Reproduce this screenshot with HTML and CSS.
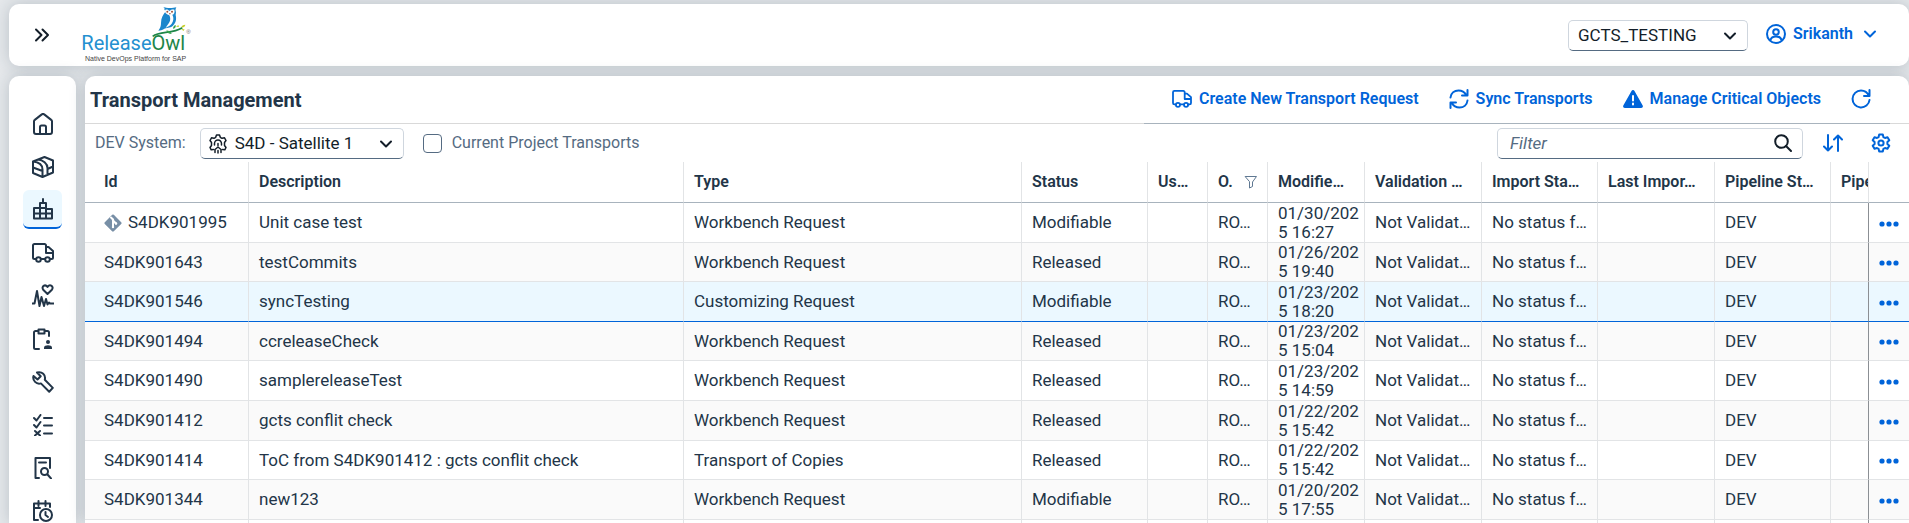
FILE: index.html
```html
<!DOCTYPE html>
<html lang="en">
<head>
<meta charset="utf-8">
<title>Transport Management</title>
<link rel="stylesheet" href="styles.css">
</head>
<body>
<svg class="sprite" aria-hidden="true">
  <symbol id="chevron" viewBox="0 0 14 14"><path d="M2 4.500l5 5 5-5"/></symbol>
  <symbol id="truck" viewBox="0 0 22 20"><path d="M4 16H2.500A1.500 1.500 0 0 1 1 14.500V2.500A1.500 1.500 0 0 1 2.500 1H12.500A1.500 1.500 0 0 1 14 2.500V10H21M14 4h2.500L21 8v6.500A1.500 1.500 0 0 1 19.500 16H18M9 16h4"/><circle cx="6.500" cy="16.500" r="2.300"/><circle cx="15.500" cy="16.500" r="2.300"/></symbol>
  <symbol id="git" viewBox="0 0 18 18"><path class="solid" d="M9 .5a1.200 1.200 0 0 1 .8.300l7.400 7.400a1.200 1.200 0 0 1 0 1.700l-7.400 7.300a1.200 1.200 0 0 1-1.700 0L.8 9.900a1.200 1.200 0 0 1 0-1.700L8.200.800A1.200 1.200 0 0 1 9 .5z"/><path class="inner" d="M7 3.500l2 2v7.500M9 6.500l3 3"/><circle class="dot" cx="9" cy="13" r="1.200"/><circle class="dot" cx="12" cy="9.500" r="1.200"/><circle class="dot" cx="9" cy="6" r="1.200"/></symbol>
  <symbol id="gear" viewBox="0 0 20 20"><path d="M8.200 1.500h3.600l.6 2.600 1.600.9 2.500-.8 1.800 3.100-1.900 1.800v1.800l1.900 1.800-1.800 3.100-2.500-.8-1.600.9-.6 2.600H8.200l-.6-2.600-1.600-.9-2.500.8-1.800-3.100 1.900-1.800V9.100L1.700 7.300l1.800-3.100 2.500.8 1.600-.9z"/><circle cx="10" cy="10" r="2.600"/></symbol>
  <symbol id="dots" viewBox="0 0 20 6"><circle class="solid" cx="3" cy="3" r="2.600"/><circle class="solid" cx="10" cy="3" r="2.600"/><circle class="solid" cx="17" cy="3" r="2.600"/></symbol>
</svg>

<header class="shell">
  <button class="menu-toggle" aria-label="Expand navigation"><svg class="icon" width="16" height="14" viewBox="0 0 16 14"><path d="M2 1.500L7.500 7 2 12.500M8.500 1.500L14 7l-5.500 5.500"/></svg></button>
  <a class="logo" href="#" aria-label="ReleaseOwl home">
    <svg width="112" height="58" viewBox="36 18 336 174">
      <path fill="#1a86cc" d="M279 21c10 4 29 4 40 1-3 5-3 9-1 15l-1 8c3 12 1 24-9 33-8 7-19 5-26 9-6 3-10 5-17 5 6-7 8-15 8-23 0-15 7-27 15-35-6-4-7-9-1-13z"/>
      <path fill="#fff" d="M286 29c6-2 9 0 12 4 4-4 9-6 15-4 2 7 0 14-6 15 5 8 4 19-2 27-5 7-13 8-18 13 4-9 11-14 13-22 2-7 0-13-3-17-8-2-14-8-11-16z"/>
      <g fill="#a0533c"><circle cx="292" cy="35" r="3"/><circle cx="306" cy="35" r="3"/><path d="M297 39h5l-2 6z"/></g>
      <path d="M248 109c22-16 58-7 89-26" fill="none" stroke="#1d8648" stroke-width="5"/>
      <path fill="#35a24d" d="M289 92c6-1 14 4 16 10-8 0-13-4-16-10zM310 87c-2-6 2-10 7-12 1 6-1 10-7 12z"/>
      <path fill="#c7cf2a" d="M334 82c1-5 5-7 12-8-1 6-5 9-12 8zM318 80l7-5 2 6zM334 87l10 1-4 5z"/>
      <text x="34" y="149" class="logo-name" fill="#2490d0">Release<tspan fill="#1d8648">Owl</tspan></text>
      <text x="349" y="101" class="logo-mark">®</text>
      <text x="45" y="183" class="logo-tag">Native DevOps Platform for SAP</text>
    </svg>
  </a>
  <div class="shell-end">
    <div class="select project">
      <select aria-label="Project"><option>GCTS_TESTING</option></select>
      <svg class="icon caret" width="14" height="14"><use href="#chevron"/></svg>
    </div>
    <button class="user">
      <svg class="icon" width="20" height="20" viewBox="0 0 20 20"><circle cx="10" cy="10" r="9"/><circle cx="10" cy="8" r="2.800"/><path d="M4.500 16c.6-2.600 2.400-3.600 5.500-3.600s4.900 1 5.500 3.600"/></svg>
      Srikanth
      <svg class="icon" width="14" height="14"><use href="#chevron"/></svg>
    </button>
  </div>
</header>

<div class="body">
  <nav class="side" aria-label="Main">
    <a href="#" aria-label="Home"><svg class="icon" width="20" height="22" viewBox="0 0 20 22"><path d="M1 8.500a2 2 0 0 1 .8-1.600L8.800 1.400a2 2 0 0 1 2.400 0l7 5.500a2 2 0 0 1 .8 1.600V19a2 2 0 0 1-2 2H3a2 2 0 0 1-2-2zM7 21v-7a1.500 1.500 0 0 1 1.500-1.500h3A1.500 1.500 0 0 1 13 14v7"/></svg></a>
    <a href="#" aria-label="Packages"><svg class="icon" width="22" height="22" viewBox="0 0 22 22"><path d="M1 5.500L12.500 1 21 4.500v12L10.500 21 1 17zM1 5.500c5 .5 9.500 3 9.500 8V21M6 3.500c5 .5 9.500 4 9.500 8.500v6.500M1 11.500l9.500 3.500M15.500 13l5.500-2.500"/></svg></a>
    <a href="#" class="active" aria-label="Transport Management" aria-current="page"><svg class="icon" width="20" height="22" viewBox="0 0 20 22"><path d="M1 20.500V10h6V5h6v6h6v9.500zM7 10v10.500M13 10v10.500M1 15.500h18M7 10h6M10 5V1"/></svg></a>
    <a href="#" aria-label="Deployments"><svg class="icon" width="22" height="20"><use href="#truck"/></svg></a>
    <a href="#" aria-label="Health"><svg class="icon" width="22" height="24" viewBox="0 0 22 24"><path d="M0 19.500h2.500L5 7l2.500 15 2-9 2.500 9 2-7 1.500 5.500 1.500-2 1 1H22M15.500 10l-4.300-4.300C9 2.500 13-.5 15.500 3 18-.5 22.300 2.500 19.900 5.700z"/></svg></a>
    <a href="#" aria-label="Assignments"><svg class="icon" width="20" height="22" viewBox="0 0 20 22"><path d="M6 21H2.500A1.500 1.500 0 0 1 1 19.500v-15A1.500 1.500 0 0 1 2.500 3H5M12 3h2.500A1.500 1.500 0 0 1 16 4.500V8M5.500 1.500h6v4h-6z"/><circle class="solid" cx="15" cy="14" r="2"/><path class="solid" d="M11 21v-1.500c0-3 8-3 8 0V21z"/></svg></a>
    <a href="#" aria-label="Tools"><svg class="icon" width="22" height="22" viewBox="0 0 22 22"><path d="M5 1.500c5-1.500 9 2.500 7.800 7.200l8 8.200-3.600 3.800-8.300-8.300C4.500 13.800.2 9.500 1.500 5L5.500 8.500 8.700 5.300z"/></svg></a>
    <a href="#" aria-label="Checks"><svg class="icon" width="20" height="22" viewBox="0 0 20 22"><path d="M1 4l2.500 2.500L7.500 1M1 11l2.500 2.500L7.500 8M2 17l5 4.500M7 17l-5 4.500M11 4h8M11 11.500h8M11 19.500h8"/></svg></a>
    <a href="#" aria-label="Reports"><svg class="icon" width="18" height="22" viewBox="0 0 18 22"><path d="M5 21H1.500V1H16v10M5 5.500h7M13.500 17.500l3.500 4"/><circle cx="10.500" cy="14.500" r="3.500"/></svg></a>
    <a href="#" aria-label="Schedules"><svg class="icon" width="20" height="22" viewBox="0 0 20 22"><path d="M5 20H1V3.500h16V7M1 8h6M5.500 1v5M12.500 1v5"/><circle cx="13" cy="15" r="6"/><path d="M12.500 12v3l2.500 2"/></svg></a>
  </nav>

  <main class="page">
    <div class="page-head">
      <h1>Transport Management</h1>
      <div class="actions">
        <button><svg class="icon" width="20" height="18"><use href="#truck"/></svg>Create New Transport Request</button>
        <button><svg class="icon" width="20" height="20" viewBox="0 0 20 20"><path d="M1.500 8.500C2 4 5.500 1.500 9.500 1.500c3.500 0 6 1.500 7.700 4.500M18.500 1v5.500H13M18.500 11.500c-.5 4.500-4 7-8 7-3.500 0-6-1.500-7.700-4.500M1.500 19v-5.500H7"/></svg>Sync Transports</button>
        <button><svg class="icon" width="20" height="18" viewBox="0 0 20 18"><path class="solid" d="M10 0c.7 0 1.200.3 1.500.9l8.200 14.600c.6 1.100-.2 2.500-1.500 2.500H1.800C.5 18-.3 16.600.3 15.500L8.500.9C8.800.3 9.300 0 10 0z"/><path class="inner" d="M10 6v4.500M10 13.500v1"/></svg>Manage Critical Objects</button>
        <button aria-label="Refresh"><svg class="icon" width="20" height="20" viewBox="0 0 20 20"><path d="M18.500 1v6H13M18 7C16.500 3.500 13.500 1.500 10 1.500A8.500 8.500 0 1 0 18.500 11"/></svg></button>
      </div>
    </div>

    <div class="toolbar">
      <label for="dev">DEV System:</label>
      <div class="select system">
        <svg class="icon lead" width="18" height="20" viewBox="0 0 18 20"><path d="M4.500 15.500l-2.300.3L1 13.500l1.500-2v-3L1 6.500l1.500-2.700 2.500.5 1.700-1L7.500 1h3l.8 2.300 1.700 1 2.500-.5L17 6.500l-1.500 2v3l1.500 2-1.200 2.300-2.300-.3M5.500 11V9.500a3.500 3.500 0 0 1 7 0V11M9 9.500v2M6 18.500v-3l3-2.500 3 2.500v3M9 16.500v2.500"/></svg>
        <select id="dev"><option>S4D - Satellite 1</option></select>
        <svg class="icon caret" width="14" height="14"><use href="#chevron"/></svg>
      </div>
      <label class="check"><input type="checkbox">Current Project Transports</label>
      <div class="search">
        <input type="text" placeholder="Filter" aria-label="Filter">
        <svg class="icon" width="18" height="18" viewBox="0 0 18 18"><circle cx="7.500" cy="7.500" r="6.300"/><path d="M12 12l5 5"/></svg>
      </div>
      <button aria-label="Sort"><svg class="icon" width="20" height="18" viewBox="0 0 20 18"><path d="M5 1v15.500M1 12.500l4 4 4-4M15 17V1.500M11 5.500l4-4 4 4"/></svg></button>
      <button aria-label="Settings"><svg class="icon" width="20" height="20"><use href="#gear"/></svg></button>
    </div>

    <table class="grid">
      <colgroup><col class="c-id"><col class="c-desc"><col class="c-type"><col class="c-status"><col class="c-short"><col class="c-short"><col class="c-date"><col class="c-info"><col class="c-info-s"><col class="c-info"><col class="c-info-s"><col class="c-cut"><col class="c-act"></colgroup>
      <thead>
        <tr><th>Id</th><th>Description</th><th>Type</th><th>Status</th><th>Us…</th><th><span class="filtered">O.<svg class="icon" width="14" height="14" viewBox="0 0 14 14"><path d="M1.500 1.500h11L8.500 7v4.500l-3 1.500V7z"/></svg></span></th><th>Modifie…</th><th>Validation …</th><th>Import Sta…</th><th>Last Impor…</th><th>Pipeline St…</th><th>Pipe</th><th></th></tr>
      </thead>
      <tbody>
        <tr><td><span class="git"><svg class="icon" width="18" height="18"><use href="#git"/></svg>S4DK901995</span></td><td>Unit case test</td><td>Workbench Request</td><td>Modifiable</td><td></td><td>RO…</td><td>01/30/202<br>5 16:27</td><td>Not Validat…</td><td>No status f…</td><td></td><td>DEV</td><td></td><td><button aria-label="More actions"><svg class="icon" width="20" height="6"><use href="#dots"/></svg></button></td></tr>
        <tr><td>S4DK901643</td><td>testCommits</td><td>Workbench Request</td><td>Released</td><td></td><td>RO…</td><td>01/26/202<br>5 19:40</td><td>Not Validat…</td><td>No status f…</td><td></td><td>DEV</td><td></td><td><button aria-label="More actions"><svg class="icon" width="20" height="6"><use href="#dots"/></svg></button></td></tr>
        <tr class="selected"><td>S4DK901546</td><td>syncTesting</td><td>Customizing Request</td><td>Modifiable</td><td></td><td>RO…</td><td>01/23/202<br>5 18:20</td><td>Not Validat…</td><td>No status f…</td><td></td><td>DEV</td><td></td><td><button aria-label="More actions"><svg class="icon" width="20" height="6"><use href="#dots"/></svg></button></td></tr>
        <tr><td>S4DK901494</td><td>ccreleaseCheck</td><td>Workbench Request</td><td>Released</td><td></td><td>RO…</td><td>01/23/202<br>5 15:04</td><td>Not Validat…</td><td>No status f…</td><td></td><td>DEV</td><td></td><td><button aria-label="More actions"><svg class="icon" width="20" height="6"><use href="#dots"/></svg></button></td></tr>
        <tr><td>S4DK901490</td><td>samplereleaseTest</td><td>Workbench Request</td><td>Released</td><td></td><td>RO…</td><td>01/23/202<br>5 14:59</td><td>Not Validat…</td><td>No status f…</td><td></td><td>DEV</td><td></td><td><button aria-label="More actions"><svg class="icon" width="20" height="6"><use href="#dots"/></svg></button></td></tr>
        <tr><td>S4DK901412</td><td>gcts conflit check</td><td>Workbench Request</td><td>Released</td><td></td><td>RO…</td><td>01/22/202<br>5 15:42</td><td>Not Validat…</td><td>No status f…</td><td></td><td>DEV</td><td></td><td><button aria-label="More actions"><svg class="icon" width="20" height="6"><use href="#dots"/></svg></button></td></tr>
        <tr><td>S4DK901414</td><td>ToC from S4DK901412 : gcts conflit check</td><td>Transport of Copies</td><td>Released</td><td></td><td>RO…</td><td>01/22/202<br>5 15:42</td><td>Not Validat…</td><td>No status f…</td><td></td><td>DEV</td><td></td><td><button aria-label="More actions"><svg class="icon" width="20" height="6"><use href="#dots"/></svg></button></td></tr>
        <tr><td>S4DK901344</td><td>new123</td><td>Workbench Request</td><td>Modifiable</td><td></td><td>RO…</td><td>01/20/202<br>5 17:55</td><td>Not Validat…</td><td>No status f…</td><td></td><td>DEV</td><td></td><td><button aria-label="More actions"><svg class="icon" width="20" height="6"><use href="#dots"/></svg></button></td></tr>
        <tr><td></td><td></td><td></td><td></td><td></td><td></td><td></td><td></td><td></td><td></td><td></td><td></td><td></td></tr>
      </tbody>
    </table>
  </main>
</div>
</body>
</html>
```
FILE: styles.css
```css
:root {
  --ink: #223548;
  --label: #556b82;
  --blue: #0064d9;
  --line: #e2e4e6;
  --rule: #a8b3bd;
  --shadow: 0 0 16px rgba(34, 53, 72, 0.22);
}
* { box-sizing: border-box; }
body {
  margin: 0;
  height: 100vh;
  padding: 4px 0 0 9px;
  display: flex;
  flex-direction: column;
  gap: 10px;
  overflow: hidden;
  background: #e5e8eb;
  color: var(--ink);
  font: 17px/20px Roboto, "Noto Sans", sans-serif;
}
button, select, input { font: inherit; color: inherit; }
button { border: 0; background: none; padding: 0; display: inline-flex; align-items: center; gap: 7px; color: var(--blue); font-size: 16px; font-weight: 600; }
.sprite { position: absolute; width: 0; height: 0; }
.icon { display: block; flex: none; fill: none; stroke: currentColor; stroke-width: 2; stroke-linejoin: round; stroke-linecap: round; }
.solid { fill: currentColor; stroke: none; }
.inner { stroke: #fff; stroke-width: 2; }
.dot { fill: #fff; stroke: none; }

.shell {
  flex: none;
  height: 62px;
  display: flex;
  align-items: center;
  padding: 0 32px 0 25px;
  border-radius: 10px;
  background: #fff;
  box-shadow: var(--shadow);
}
.menu-toggle { color: #131e29; }
.logo { margin-left: 32px; }
.logo svg { display: block; }
.logo-name { font: 60px Roboto, sans-serif; }
.logo-mark { font: 18px "Liberation Sans", sans-serif; fill: #666; }
.logo-tag { font: 21px "Liberation Sans", sans-serif; fill: #444; }
.shell-end { margin-left: auto; display: flex; align-items: center; gap: 18px; }

.select { position: relative; }
.select select {
  display: block;
  width: 100%;
  height: 31px;
  padding: 0 36px 0 9px;
  appearance: none;
  border: 1px solid #cfd6de;
  border-bottom: 1px solid var(--label);
  border-radius: 5px;
  background: #fff;
  color: #131e29;
}
.project { width: 180px; }
.system { width: 204px; }
.system select { padding-left: 34px; }
.caret { position: absolute; right: 11px; top: 9px; color: #131e29; pointer-events: none; }
.lead { position: absolute; left: 9px; top: 6px; color: #131e29; pointer-events: none; }
.icon.lead { stroke-width: 1.5; }
.user { margin-bottom: 2px; }
.user .icon:last-child { margin-left: 3px; }

.body { flex: 1; min-height: 0; display: flex; gap: 9px; }
.side {
  width: 67px;
  flex: none;
  padding-top: 28px;
  display: flex;
  flex-direction: column;
  align-items: center;
  gap: 4px;
  overflow: hidden;
  border-radius: 10px 10px 0 0;
  background: #fff;
}
.side, .page { box-shadow: var(--shadow); }
.side a { flex: none; width: 39px; height: 39px; display: grid; place-items: center; border-radius: 6px; color: var(--ink); }
.side .active { background: #ebf8ff; border-bottom: 2px solid var(--blue); }

.page { flex: 1; min-width: 0; overflow: hidden; border-radius: 10px 10px 0 0; background: #fff; }
.page-head { height: 48px; display: flex; align-items: center; padding: 0 19px 0 5px; border-bottom: 1px solid #d9d9d9; }
h1 { margin: 0; font-size: 20px; line-height: 24px; font-weight: 700; }
.actions { align-self: stretch; margin: 0 0 -1px auto; padding: 0 19px 2px 28px; display: flex; align-items: center; gap: 30px; border-bottom: 1px solid var(--rule); }

.toolbar { height: 38px; display: flex; align-items: center; padding: 0 18px 0 10px; color: var(--label); font-size: 16px; }
.toolbar .select { margin-left: 14px; font-size: 17px; }
.check { display: flex; align-items: center; gap: 10px; margin-left: 19px; }
.check input { appearance: none; width: 19px; height: 19px; margin: 0; border: 1px solid var(--label); border-radius: 4px; background: #fff; }
.search { margin-left: auto; width: 306px; height: 31px; display: flex; align-items: center; padding: 0 10px 0 12px; border: 1px solid #cfd6de; border-bottom-color: var(--label); border-radius: 5px; color: #131e29; }
.search input { flex: 1; min-width: 0; border: 0; padding: 0; outline: 0; background: none; font-size: 17px; }
.search input::placeholder { color: var(--label); font-style: italic; opacity: 1; }
.toolbar button { margin-left: 20px; }
.toolbar button:last-child { margin-left: 28px; }

.grid { width: 100%; table-layout: fixed; border-collapse: separate; border-spacing: 0; }
.c-id { width: 164px; }
.c-desc { width: 435px; }
.c-status { width: 126px; }
.c-short { width: 60px; }
.c-date { width: 97px; }
.c-info { width: 117px; }
.c-info-s { width: 116px; }
.c-cut { width: 38px; }
.c-act { width: 40px; }
.grid th, .grid td { padding: 0 0 0 10px; text-align: left; white-space: nowrap; overflow: hidden; border-right: 1px solid var(--line); border-bottom: 1px solid var(--line); }
.grid th { height: 41px; border-bottom-color: var(--rule); font-size: 16px; font-weight: 600; }
.grid td { height: 40px; line-height: 19px; }
.grid tr > :first-child { padding-left: 19px; }
.grid tr > :last-child { border-right: 0; }
.grid td:nth-child(12) { border-right-color: #8b8f94; }
.grid tbody tr:nth-child(5n+2) td, .grid tbody tr:nth-child(5n+4) td { height: 39px; }
.grid tbody tr:nth-child(even) { background: #fafafa; }
.grid .selected { background: #ebf8ff; }
.grid .selected td { border-bottom-color: var(--blue); }
.grid td button { vertical-align: middle; }
.filtered { display: flex; align-items: center; justify-content: space-between; padding-right: 9px; }
.filtered .icon { color: #5f7892; stroke-width: 1; }
.git { display: flex; align-items: center; gap: 6px; }
.git .icon { color: #788fa6; }
.git .inner { stroke-width: 1; }
```
